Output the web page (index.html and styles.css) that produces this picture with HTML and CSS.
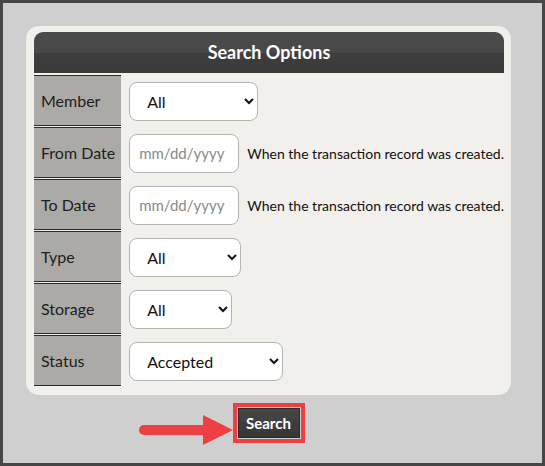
FILE: index.html
```html
<!DOCTYPE html>
<html lang="en">
<head>
    <meta charset="UTF-8">
    <title>Search Options</title>
    <link rel="stylesheet" href="styles.css">
</head>
<body>
    <div class="frame">
        <div class="panel">
            <div class="panel-header">Search Options</div>
            <table class="options">
                <tr>
                    <td class="label">Member</td>
                    <td class="value">
                        <select class="field w-member">
                            <option>All</option>
                        </select>
                    </td>
                </tr>
                <tr>
                    <td class="label">From Date</td>
                    <td class="value">
                        <input type="text" class="field w-date" placeholder="mm/dd/yyyy">
                        <span class="hint">When the transaction record was created.</span>
                    </td>
                </tr>
                <tr>
                    <td class="label">To Date</td>
                    <td class="value">
                        <input type="text" class="field w-date" placeholder="mm/dd/yyyy">
                        <span class="hint">When the transaction record was created.</span>
                    </td>
                </tr>
                <tr>
                    <td class="label">Type</td>
                    <td class="value">
                        <select class="field w-type">
                            <option>All</option>
                        </select>
                    </td>
                </tr>
                <tr>
                    <td class="label">Storage</td>
                    <td class="value">
                        <select class="field w-storage">
                            <option>All</option>
                        </select>
                    </td>
                </tr>
                <tr>
                    <td class="label">Status</td>
                    <td class="value">
                        <select class="field w-status">
                            <option>Accepted</option>
                        </select>
                    </td>
                </tr>
            </table>
        </div>

        <div class="actions">
            <svg class="arrow" width="96" height="32" viewBox="0 0 96 32">
                <line x1="5" y1="16" x2="68" y2="16" stroke="#ee4044" stroke-width="10" stroke-linecap="round"/>
                <polygon points="64,1 94,16 64,31" fill="#ee4044"/>
            </svg>
            <span class="highlight">
                <button class="btn">Search</button>
            </span>
        </div>
    </div>
</body>
</html>
```

FILE: styles.css
```css
html, body {
    margin: 0;
    padding: 0;
}
body {
    font-family: Lato, "Open Sans", sans-serif;
    background-color: #444;
}
.frame {
    box-sizing: border-box;
    width: 545px;
    height: 466px;
    border: 3px solid #464646;
    background-color: #cfcfcf;
    padding: 23px 0 0 23px;
}
.panel {
    width: 485px;
    box-sizing: border-box;
    background-color: #f1f0ec;
    border-radius: 13px;
    padding: 6px 7px 8px 8px;
}
.panel-header {
    height: 41px;
    line-height: 41px;
    text-align: center;
    color: #fff;
    font-weight: bold;
    font-size: 18px;
    border-radius: 9px 9px 0 0;
    background: linear-gradient(#4b4b4b 0%, #484848 50%, #3d3d3d 52%, #3b3b3b 100%);
    margin-bottom: 1px;
}
.options {
    width: 100%;
    border-collapse: separate;
    border-spacing: 0 1px;
}
.label {
    width: 89px;
    height: 51px;
    padding: 0 0 0 7px;
    box-sizing: border-box;
    background-color: #acaaa7;
    border-top: 1px solid #2b2b2b;
    border-bottom: 1px solid #2b2b2b;
    color: #1e1e1e;
    font-size: 16px;
}
.value {
    padding: 1px 0 0 8px;
    white-space: nowrap;
}
.field {
    height: 39px;
    box-sizing: border-box;
    border: 1px solid #b4b4b4;
    border-radius: 8px;
    background-color: #fff;
    font-family: Lato, "Open Sans", sans-serif;
    font-size: 16px;
    color: #111;
    padding: 0 0 0 13px;
    vertical-align: middle;
}
input.field {
    padding-left: 9px;
    font-size: 15px;
}
input.field::placeholder {
    color: #8a8a8a;
}
.w-member { width: 129px; }
.w-date { width: 110px; }
.w-type { width: 112px; }
.w-storage { width: 103px; }
.w-status { width: 154px; }
.hint {
    font-size: 14px;
    color: #111;
    margin-left: 4px;
    vertical-align: middle;
}
.actions {
    position: relative;
    width: 485px;
    display: flex;
    justify-content: center;
    padding-top: 8px;
}
.arrow {
    position: absolute;
    left: 113px;
    top: 19px;
}
.highlight {
    display: inline-block;
    border: 4px solid #ee4044;
    padding: 1px;
    line-height: 0;
}
.btn {
    width: 62px;
    height: 30px;
    background: linear-gradient(#474747, #363636);
    color: #fff;
    font-family: Lato, "Open Sans", sans-serif;
    font-weight: bold;
    font-size: 15px;
    border: 1px solid #2a2a2a;
    padding: 0;
    cursor: pointer;
}
```
